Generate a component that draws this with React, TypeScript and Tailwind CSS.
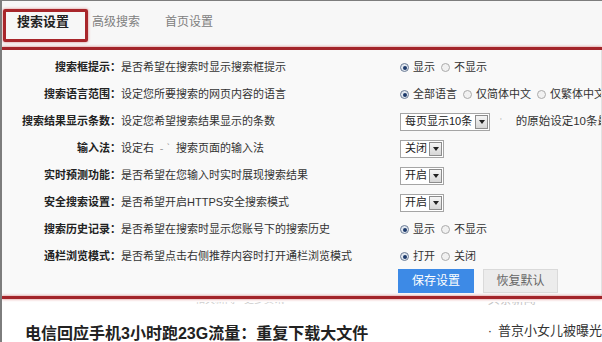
import React from "react";

const font = "font-['Liberation_Sans','Noto_Sans_CJK_SC',sans-serif]";

const Radio = ({ checked }: { checked?: boolean }) => (
  <span
    className={`w-[9px] h-[9px] rounded-full border flex items-center justify-center shrink-0 ${
      checked ? "border-[#6d7d96] bg-[#e2e8f0]" : "border-[#ababab] bg-[#f1f1f1]"
    }`}
  >
    {checked && <span className="w-[4px] h-[4px] rounded-full bg-[#1d3a6b]" />}
  </span>
);

const RadioGroup = ({ options }: { options: string[] }) => (
  <div className="flex items-center whitespace-nowrap">
    {options.map((o, i) => (
      <div key={o} className="flex items-center mr-[6px]">
        <Radio checked={i === 0} />
        <span className="ml-[4px] text-[11px] text-[#333] leading-none">{o}</span>
      </div>
    ))}
  </div>
);

const Select = ({ label, w }: { label: string; w: string }) => (
  <div className={`h-[18px] border border-[#a5a5a5] bg-white flex items-center justify-between pl-[4px] pr-[1px] shrink-0 ${w}`}>
    <span className="text-[11px] text-[#222] leading-none whitespace-nowrap">{label}</span>
    <span className="w-[13px] h-[14px] border border-[#8c8c8c] bg-linear-to-b from-[#f6f6f6] to-[#d6d6d6] flex items-center justify-center">
      <span className="w-0 h-0 border-l-[3px] border-r-[3px] border-t-[4px] border-l-transparent border-r-transparent border-t-[#222]" />
    </span>
  </div>
);

interface Row {
  label: string;
  desc: React.ReactNode;
  ctrl: React.ReactNode;
}

const rows: Row[] = [
  { label: "搜索框提示：", desc: "是否希望在搜索时显示搜索框提示", ctrl: <RadioGroup options={["显示", "不显示"]} /> },
  {
    label: "搜索语言范围：",
    desc: "设定您所要搜索的网页内容的语言",
    ctrl: <RadioGroup options={["全部语言", "仅简体中文", "仅繁体中文"]} />,
  },
  {
    label: "搜索结果显示条数：",
    desc: "设定您希望搜索结果显示的条数",
    ctrl: (
      <div className="flex items-center whitespace-nowrap">
        <Select label="每页显示10条" w="w-[90px]" />
        <span className="ml-[10px] text-[9px] text-[#bbb]">'</span>
        <span className="ml-[14px] text-[11.5px] text-[#333]">的原始设定10条最多</span>
      </div>
    ),
  },
  {
    label: "输入法：",
    desc: (
      <>
        设定右<span className="inline-block w-[22px] text-center text-[#999]">- ˋ</span>搜索页面的输入法
      </>
    ),
    ctrl: <Select label="关闭" w="w-[44px]" />,
  },
  { label: "实时预测功能：", desc: "是否希望在您输入时实时展现搜索结果", ctrl: <Select label="开启" w="w-[44px]" /> },
  { label: "安全搜索设置：", desc: "是否希望开启HTTPS安全搜索模式", ctrl: <Select label="开启" w="w-[44px]" /> },
  { label: "搜索历史记录：", desc: "是否希望在搜索时显示您账号下的搜索历史", ctrl: <RadioGroup options={["显示", "不显示"]} /> },
  { label: "通栏浏览模式：", desc: "是否希望点击右侧推荐内容时打开通栏浏览模式", ctrl: <RadioGroup options={["打开", "关闭"]} /> },
];

export default function App() {
  return (
    <div className={`w-[602px] h-[342px] overflow-hidden border-l-2 border-t border-[#7d7d7d] bg-white ${font}`}>
      {/* tabs */}
      <div className="h-[46px] bg-[#f7f7f7] flex items-start">
        <div className="ml-[1px] mt-[8px] w-[85px] h-[33px] border-[3px] border-[#a8262b] rounded-[2px] shadow-[0_0_3px_rgba(190,40,40,0.55)] pl-[11px] text-[13px] font-bold text-[#222] leading-[20px]">
          搜索设置
        </div>
        <div className="ml-[4px] mt-[11px] text-[12px] text-[#808080] leading-[20px]">高级搜索</div>
        <div className="ml-[25px] mt-[11px] text-[12px] text-[#808080] leading-[20px]">首页设置</div>
      </div>
      <div className="h-[3px] bg-[#a3252a] shadow-[0_0_3px_rgba(200,60,60,0.7)]" />

      {/* settings */}
      <div className="bg-[#f9f9f9] pt-[4px] pb-[3px] border-r border-[#e2e2e2]">
        {rows.map((r) => (
          <div key={r.label} className="h-[27px] flex items-center overflow-hidden">
            <div className="w-[119px] shrink-0 text-right text-[11px] font-bold text-[#222] whitespace-nowrap">{r.label}</div>
            <div className="w-[279px] shrink-0 text-[11px] text-[#333] whitespace-nowrap">{r.desc}</div>
            {r.ctrl}
          </div>
        ))}
        <div className="flex mt-[-1px] ml-[396px]">
          <button className="w-[76px] h-[24px] bg-[#3d8ae6] text-white text-[12px] leading-none">保存设置</button>
          <button className="ml-[9px] w-[75px] h-[24px] bg-[#ececec] border border-[#dadada] text-[#666] text-[12px] leading-none">
            恢复默认
          </button>
        </div>
      </div>
      <div className="h-[3px] bg-[#a3252a] shadow-[0_0_3px_rgba(200,60,60,0.7)]" />

      {/* news below */}
      <div className="flex">
        <div className="w-[470px] pl-[23px]">
          <div className="ml-[170px] mt-[3px] h-[5px] overflow-hidden">
            <div className="-mt-[8px] text-[10px] leading-[12px] text-[#cfcfcf] whitespace-nowrap">相关新闻 · 更多资讯</div>
          </div>
          <div className="mt-[17px] text-[16px] font-bold leading-[20px] text-[#222] whitespace-nowrap">
            电信回应手机3小时跑23G流量：重复下载大文件
          </div>
        </div>
        <div className="pl-[32px]">
          <div className="mt-[3px] h-[5px] overflow-hidden">
            <div className="-mt-[8px] text-[12px] leading-[12px] text-[#c4c4c4] whitespace-nowrap">头条新闻</div>
          </div>
          <div className="mt-[15px] text-[13px] leading-[18px] text-[#333] whitespace-nowrap">
            <span className="mr-[6px]">·</span>普京小女儿被曝光
          </div>
        </div>
      </div>
    </div>
  );
}
